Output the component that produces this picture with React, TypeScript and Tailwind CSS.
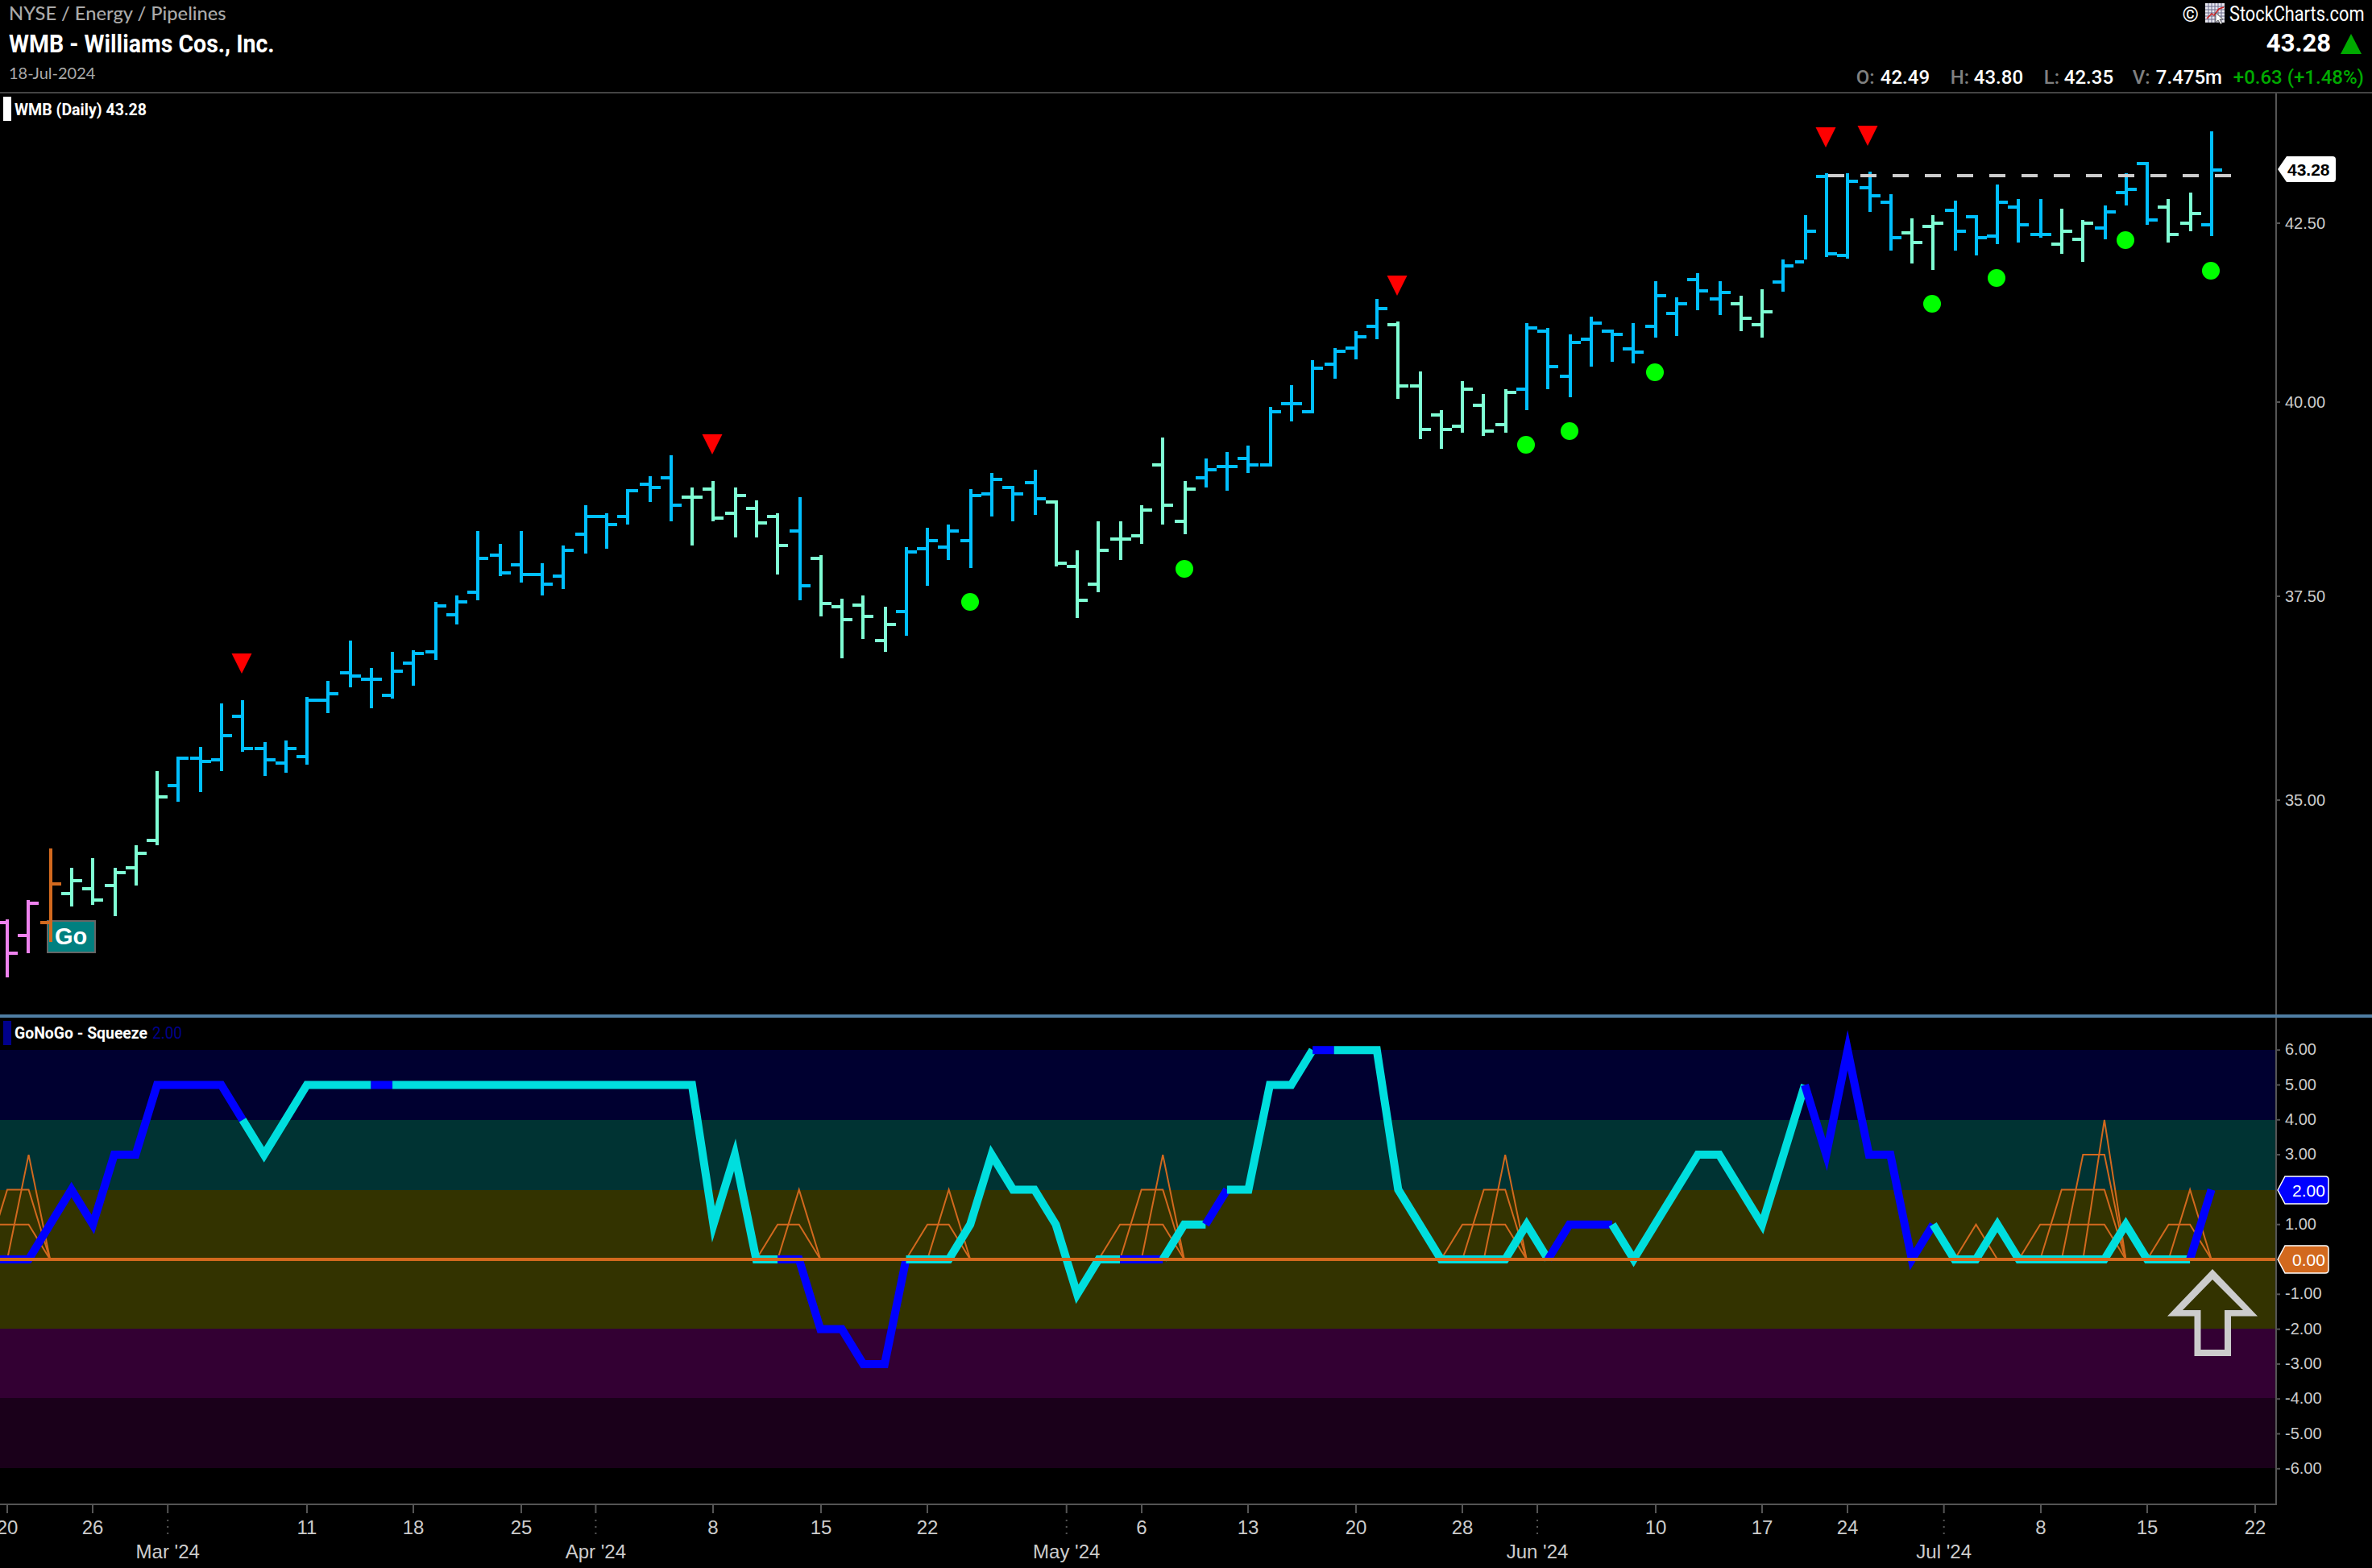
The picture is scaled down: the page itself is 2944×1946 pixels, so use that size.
import React from 'react';

// high, low, open, close in screen pixels, one row per trading day
const bars: Array<[number, number, number, number]> = [
  [1141, 1213, 1145, 1183], [1117, 1183, 1161, 1121], [1053, 1169, 1145, 1097], [1077, 1125, 1109, 1093],
  [1065, 1123, 1103, 1117], [1077, 1137, 1099, 1083], [1049, 1099, 1077, 1059], [957, 1049, 1043, 989],
  [939, 995, 975, 941], [927, 983, 941, 945], [873, 957, 943, 913], [869, 933, 889, 929],
  [921, 963, 929, 943], [919, 959, 947, 929], [865, 949, 939, 869], [845, 885, 869, 861],
  [795, 853, 835, 839], [829, 879, 843, 843], [809, 867, 863, 833], [807, 851, 823, 811],
  [747, 819, 809, 752], [739, 775, 763, 747], [659, 745, 735, 693], [675, 715, 689, 711],
  [659, 723, 701, 713], [699, 739, 713, 725], [677, 731, 715, 683], [627, 687, 663, 641],
  [637, 681, 641, 651], [607, 651, 641, 609], [591, 623, 601, 605], [565, 647, 593, 627],
  [605, 677, 617, 617], [597, 647, 607, 643], [605, 667, 637, 615], [621, 667, 631, 649],
  [637, 713, 641, 677], [617, 745, 659, 727], [689, 765, 693, 749], [743, 817, 753, 769],
  [739, 793, 751, 765], [753, 809, 795, 775], [679, 789, 759, 685], [655, 727, 681, 671],
  [651, 695, 679, 659], [607, 705, 671, 615], [587, 641, 613, 595], [603, 647, 605, 613],
  [583, 639, 599, 619], [621, 703, 623, 699], [683, 767, 703, 745], [647, 735, 725, 683],
  [647, 695, 669, 669], [627, 675, 665, 633], [543, 651, 577, 627], [597, 663, 647, 607],
  [569, 605, 593, 583], [561, 609, 579, 579], [553, 587, 569, 577], [505, 579, 577, 511],
  [478, 523, 501, 501], [447, 513, 511, 457], [432, 470, 452, 436], [411, 446, 432, 418],
  [371, 421, 405, 383], [399, 495, 403, 479], [461, 545, 479, 533], [509, 557, 515, 533],
  [473, 537, 529, 483], [489, 541, 503, 535], [483, 537, 527, 487], [401, 509, 483, 407],
  [407, 483, 411, 455], [415, 493, 467, 425], [393, 455, 421, 401], [409, 449, 411, 415],
  [401, 451, 433, 437], [349, 419, 405, 367], [369, 417, 389, 377], [339, 385, 347, 361],
  [349, 391, 371, 363], [367, 411, 377, 395], [359, 419, 403, 387], [322, 362, 350, 330],
  [267, 322, 325, 287], [215, 319, 219, 315], [215, 321, 317, 225], [213, 263, 233, 243],
  [241, 311, 251, 295], [271, 327, 289, 301], [267, 335, 281, 277], [249, 311, 261, 287],
  [267, 317, 269, 295], [229, 303, 293, 251], [247, 301, 257, 279], [247, 295, 291, 291],
  [259, 315, 303, 287], [273, 325, 297, 277], [255, 297, 283, 263], [215, 255, 239, 235],
  [201, 279, 203, 273], [247, 301, 257, 291], [239, 287, 277, 265], [163, 293, 279, 211],
];

const BLUE = '#00bfff';
const MINT = '#7fffd4';
const barColor = (i: number): string => {
  if (i < 2) return '#ee82ee';
  if (i === 2) return '#d2691e';
  const mint = [[3, 7], [32, 36], [38, 41], [49, 55], [65, 70], [81, 82], [89, 90], [96, 97], [101, 102]];
  return mint.some(([a, b]) => i >= a && i <= b) ? MINT : BLUE;
};

const barX = (i: number) => 2 * Math.floor((9.3 + 26.56 * i) / 2) + 1;
const lineX = (i: number) => 9 + 26.56 * i;
const ZERO = 1563;
const UNIT = 43.3;
const valueY = (v: number) => ZERO - UNIT * v;

// squeeze oscillator, first value belongs to the bar left of the screen (i = -1)
const squeeze = [
  0, 0, 0, 1, 2, 1, 3, 3, 5, 5, 5, 5, 4, 3, 4, 5, 5, 5, 5, 5, 5, 5, 5, 5, 5, 5, 5, 5, 5, 5, 5, 5, 5, 5,
  1, 3, 0, 0, 0, -2, -2, -3, -3, 0, 0, 0, 1, 3, 2, 2, 1, -1, 0, 0, 0, 0, 1, 1, 2, 2, 5, 5, 6, 6, 6, 6,
  2, 1, 0, 0, 0, 0, 1, 0, 1, 1, 1, 0, 1, 2, 3, 3, 2, 1, 3, 5, 3, 6, 3, 3, 0, 1, 0, 0, 1, 0, 0, 0, 0, 0,
  1, 0, 0, 0, 2,
];

const segments: Array<[number, number, string]> = [
  [-1, 11, '#0000ff'], [11, 17, '#00dede'], [17, 18, '#0000ff'], [18, 36, '#00dede'], [36, 42, '#0000ff'],
  [42, 52, '#00dede'], [52, 54, '#0000ff'], [54, 56, '#00dede'], [56, 57, '#0000ff'], [57, 61, '#00dede'],
  [61, 62, '#0000ff'], [62, 72, '#00dede'], [72, 75, '#0000ff'], [75, 84, '#00dede'], [84, 90, '#0000ff'],
  [90, 102, '#00dede'], [102, 103, '#0000ff'],
];

// thin squeeze wireframes: [bar, value] pairs
const wires: Array<Array<[number, number]>> = [
  [[-1, 1], [1, 1], [2, 0]], [[-1, 0], [0, 2], [1, 2], [2, 0]], [[0, 0], [1, 3], [2, 0]],
  [[35, 0], [36, 1], [37, 1], [38, 0]], [[36, 0], [37, 2], [38, 0]],
  [[42, 0], [43, 1], [44, 1], [45, 0]], [[43, 0], [44, 2], [45, 0]],
  [[51, 0], [52, 1], [54, 1], [55, 0]], [[52, 0], [53, 2], [54, 2], [55, 0]], [[53, 0], [54, 3], [55, 0]],
  [[67, 0], [68, 1], [70, 1], [71, 0]], [[68, 0], [69, 2], [70, 2], [71, 0]], [[69, 0], [70, 3], [71, 0]],
  [[91, 0], [92, 1], [93, 0]],
  [[94, 0], [95, 1], [98, 1], [99, 0]], [[95, 0], [96, 2], [98, 2], [99, 0]], [[96, 0], [97, 3], [98, 3], [99, 0]],
  [[97, 0], [98, 4], [99, 0]],
  [[100, 0], [101, 1], [102, 1], [103, 0]], [[101, 0], [102, 2], [103, 0]],
];

const redMarks = [[300, 811], [884, 539], [1734, 342], [2266, 158], [2318, 156]];
const greenDots = [
  [1204, 747], [1470, 706], [1894, 552], [1948, 535], [2054, 462], [2398, 377], [2478, 345], [2638, 298], [2744, 336],
];
const priceTicks: Array<[string, number]> = [['42.50', 277], ['40.00', 499], ['37.50', 740], ['35.00', 993]];
const levels = [6, 5, 4, 3, 1, -1, -2, -3, -4, -5, -6];

const days: Array<[string, number]> = [
  ['20', 0], ['26', 4], ['11', 14], ['18', 19], ['25', 24], ['8', 33], ['15', 38], ['22', 43], ['6', 53], ['13', 58],
  ['20', 63], ['28', 68], ['10', 77], ['17', 82], ['24', 86], ['8', 95], ['15', 100], ['22', 105],
];
const months: Array<[string, number]> = [
  ["Mar '24", 7.5], ["Apr '24", 27.5], ["May '24", 49.5], ["Jun '24", 71.5], ["Jul '24", 90.5],
];

const arial = "font-['Liberation_Sans',Arial,sans-serif]";
const roboto = "font-['Roboto',sans-serif]";

function ValuePill({ y, fill, text }: { y: number; fill: string; text: string }) {
  return (
    <g>
      <path
        d={`M2827 ${y} L2836 ${y - 17} H2886 Q2890 ${y - 17} 2890 ${y - 13} V${y + 13} Q2890 ${y + 17} 2886 ${y + 17} H2836 Z`}
        fill={fill}
        stroke="#fff"
        strokeWidth="1.5"
      />
      <text x="2845" y={y + 8} fill="#fff" className={`${arial} text-[21px]`}>
        {text}
      </text>
    </g>
  );
}

function PriceChart() {
  return (
    <svg width="2944" height="1143" viewBox="0 116 2944 1143" className="block shrink-0">
      <rect x="4" y="120" width="10" height="30" fill="#fff" />
      <text x="18" y="143" fill="#fff" textLength="164" lengthAdjust="spacingAndGlyphs" className={`${roboto} text-[20px] font-bold`}>
        WMB (Daily) 43.28
      </text>

      <rect x="59" y="1143" width="59" height="39" fill="#008080" stroke="#666" strokeWidth="2" />
      <text x="68" y="1172" fill="#fff" className={`${arial} text-[29px] font-bold`}>
        Go
      </text>

      <g shapeRendering="crispEdges">
        {bars.map(([high, low, open, close], i) => {
          const x = barX(i);
          const color = barColor(i);
          return (
            <g key={i} fill={color}>
              <rect x={x - 2} y={high} width="4" height={low - high} />
              <rect x={x - 13} y={open - 2} width="11" height="4" />
              <rect x={x + 2} y={close - 2} width="11" height="4" />
            </g>
          );
        })}
      </g>

      <line x1="2267" y1="218" x2="2770" y2="218" stroke="#ccc" strokeWidth="4" strokeDasharray="20 20" strokeDashoffset="-2" />

      {redMarks.map(([x, y]) => (
        <polygon key={x} points={`${x - 12.5},${y} ${x + 12.5},${y} ${x},${y + 25}`} fill="#ff0000" />
      ))}
      {greenDots.map(([x, y]) => (
        <circle key={x} cx={x} cy={y} r="11" fill="#00ff00" />
      ))}

      <line x1="2825" y1="116" x2="2825" y2="1259" stroke="#555" strokeWidth="2" />
      {priceTicks.map(([label, y]) => (
        <g key={label}>
          <line x1="2825" y1={y} x2="2830" y2={y} stroke="#555" strokeWidth="2" />
          <text x="2836" y={y + 7} fill="#ccc" className={`${arial} text-[20px]`}>
            {label}
          </text>
        </g>
      ))}

      <path d="M2827 210 L2838 194 H2895 Q2899 194 2899 198 V222 Q2899 226 2895 226 H2838 Z" fill="#fff" />
      <text x="2839" y="218" fill="#000" className={`${arial} text-[21px] font-bold`}>
        43.28
      </text>
    </svg>
  );
}

function SqueezeChart() {
  return (
    <svg width="2944" height="683" viewBox="0 1263 2944 683" className="block shrink-0">
      <rect x="4" y="1267" width="10" height="30" fill="#00008b" />
      <text x="18" y="1289" fill="#fff" textLength="165" lengthAdjust="spacingAndGlyphs" className={`${roboto} text-[20px] font-bold`}>
        GoNoGo - Squeeze
      </text>
      <text x="189" y="1289" fill="#00008b" textLength="37" lengthAdjust="spacingAndGlyphs" className={`${roboto} text-[20px]`}>
        2.00
      </text>

      <g shapeRendering="crispEdges">
        <rect x="0" y="1303" width="2824" height="87" fill="#000030" />
        <rect x="0" y="1390" width="2824" height="87" fill="#003333" />
        <rect x="0" y="1477" width="2824" height="172" fill="#333300" />
        <rect x="0" y="1649" width="2824" height="86" fill="#330033" />
        <rect x="0" y="1735" width="2824" height="87" fill="#1a001a" />
      </g>

      {wires.map((wire, k) => (
        <polyline
          key={k}
          points={wire.map(([i, v]) => `${lineX(i)},${valueY(v)}`).join(' ')}
          fill="none"
          stroke="#d2691e"
          strokeWidth="2"
        />
      ))}

      {segments.map(([from, to, color]) => (
        <polyline
          key={from}
          points={squeeze
            .slice(from + 1, to + 2)
            .map((v, k) => `${lineX(from + k)},${valueY(v)}`)
            .join(' ')}
          fill="none"
          stroke={color}
          strokeWidth="10"
          strokeLinejoin="miter"
          strokeMiterlimit="12"
        />
      ))}

      <rect x="0" y={ZERO - 2} width="2824" height="4" fill="#d2691e" />

      <path
        fillRule="evenodd"
        fill="#ccc"
        d="M2746 1575 L2802 1633.5 H2769 V1683 H2723.5 V1633.5 H2690 Z M2746 1588 L2709 1626 H2731.5 V1675 H2761 V1626 H2784 Z"
      />

      <line x1="2825" y1="1263" x2="2825" y2="1868" stroke="#555" strokeWidth="2" />
      <line x1="0" y1="1867" x2="2826" y2="1867" stroke="#555" strokeWidth="2" />

      {levels.map((v) => (
        <g key={v}>
          <line x1="2825" y1={valueY(v)} x2="2830" y2={valueY(v)} stroke="#555" strokeWidth="2" />
          <text x="2836" y={valueY(v) + 6} fill="#ccc" className={`${arial} text-[20px]`}>
            {v.toFixed(2)}
          </text>
        </g>
      ))}

      <ValuePill y={1477} fill="#0000ff" text="2.00" />
      <ValuePill y={1563} fill="#d2691e" text="0.00" />

      {days.map(([label, i]) => (
        <g key={i}>
          <line x1={barX(i)} y1="1868" x2={barX(i)} y2="1878" stroke="#555" strokeWidth="2" />
          <text x={barX(i)} y="1904" fill="#ccc" textAnchor="middle" className={`${arial} text-[24px]`}>
            {label}
          </text>
        </g>
      ))}
      {months.map(([label, i]) => (
        <g key={label}>
          <line x1={lineX(i)} y1="1868" x2={lineX(i)} y2="1878" stroke="#555" strokeWidth="2" />
          <line x1={lineX(i)} y1="1886" x2={lineX(i)} y2="1904" stroke="#555" strokeWidth="2" strokeDasharray="2 6" />
          <text x={lineX(i)} y="1934" fill="#ccc" textAnchor="middle" className={`${arial} text-[24px]`}>
            {label}
          </text>
        </g>
      ))}
    </svg>
  );
}

function StockChartsLogo() {
  return (
    <svg width="28" height="27" viewBox="0 0 28 27" className="shrink-0">
      <rect x="1" y="0" width="24" height="24" fill="#e8e8f0" />
      <path d="M1 4H25M1 8H25M1 12H25M1 16H25M1 20H25M5 0V24M9 0V24M13 0V24M17 0V24M21 0V24" stroke="#6a6a8a" strokeWidth="1" />
      <path d="M3 19L9 13L12 15L18 7L24 5" fill="none" stroke="#d02020" strokeWidth="1.5" />
      <path d="M14 12L14 24L17 21L20 26L22 25L19 20L23 20Z" fill="#fff" stroke="#333" strokeWidth="0.7" />
    </svg>
  );
}

function Quote({ label, value, labelWidth, valueWidth }: { label: string; value: string; labelWidth: string; valueWidth: string }) {
  return (
    <span className="flex">
      <span className={`text-[#808080] ${labelWidth}`}>{label}</span>
      <span className={`whitespace-nowrap text-white ${valueWidth}`}>{value}</span>
    </span>
  );
}

function Header() {
  return (
    <header className="flex h-[116px] shrink-0 justify-between border-b-2 border-[#444] pl-[11px] pr-[10px]">
      <div className="flex flex-col">
        <div className="mt-[2px] font-['Lato',sans-serif] text-[23.7px] font-medium leading-[29px] text-[#aaa]">
          NYSE / Energy / Pipelines
        </div>
        <div className="mt-[8px] origin-left scale-x-[0.92] whitespace-nowrap font-['Roboto',sans-serif] text-[31px] font-bold leading-[32px] text-white">
          WMB - Williams Cos., Inc.
        </div>
        <div className="mt-[7px] font-['Lato',sans-serif] text-[20px] leading-[24px] text-[#aaa]">18-Jul-2024</div>
      </div>

      <div className="flex flex-col items-end font-['Roboto',sans-serif]">
        <div className="mt-[4px] flex items-start leading-[30px] text-white">
          <span className="mr-[7px] text-[26px] leading-[28px]">©</span>
          <StockChartsLogo />
          <span className="ml-[3px] flex w-[167px] justify-end">
            <span className="shrink-0 origin-right scale-x-[0.87] whitespace-nowrap text-[25px] leading-[28px]">
              StockCharts.com
            </span>
          </span>
        </div>
        <div className="mt-[5px] flex items-center pr-[3px]">
          <span className="text-[31px] font-bold leading-[34px] text-white">43.28</span>
          <svg width="26" height="25" viewBox="0 0 26 25" className="ml-[12px]">
            <polygon points="13,0 26,25 0,25" fill="#00aa00" />
          </svg>
        </div>
        <div className="mt-[10px] flex text-[24px] font-medium leading-[30px]">
          <Quote label="O:" value="42.49" labelWidth="w-[30px]" valueWidth="w-[87px]" />
          <Quote label="H:" value="43.80" labelWidth="w-[29px]" valueWidth="w-[87px]" />
          <Quote label="L:" value="42.35" labelWidth="w-[25px]" valueWidth="w-[85px]" />
          <Quote label="V:" value="7.475m" labelWidth="w-[29px]" valueWidth="w-[96px]" />
          <span className="whitespace-nowrap text-[#00aa00]">+0.63 (+1.48%)</span>
        </div>
      </div>
    </header>
  );
}

export default function App() {
  return (
    <div className="flex h-[1946px] w-[2944px] flex-col overflow-hidden bg-black">
      <Header />
      <PriceChart />
      <div className="h-[4px] shrink-0 bg-[#4f7da3]" />
      <SqueezeChart />
    </div>
  );
}
